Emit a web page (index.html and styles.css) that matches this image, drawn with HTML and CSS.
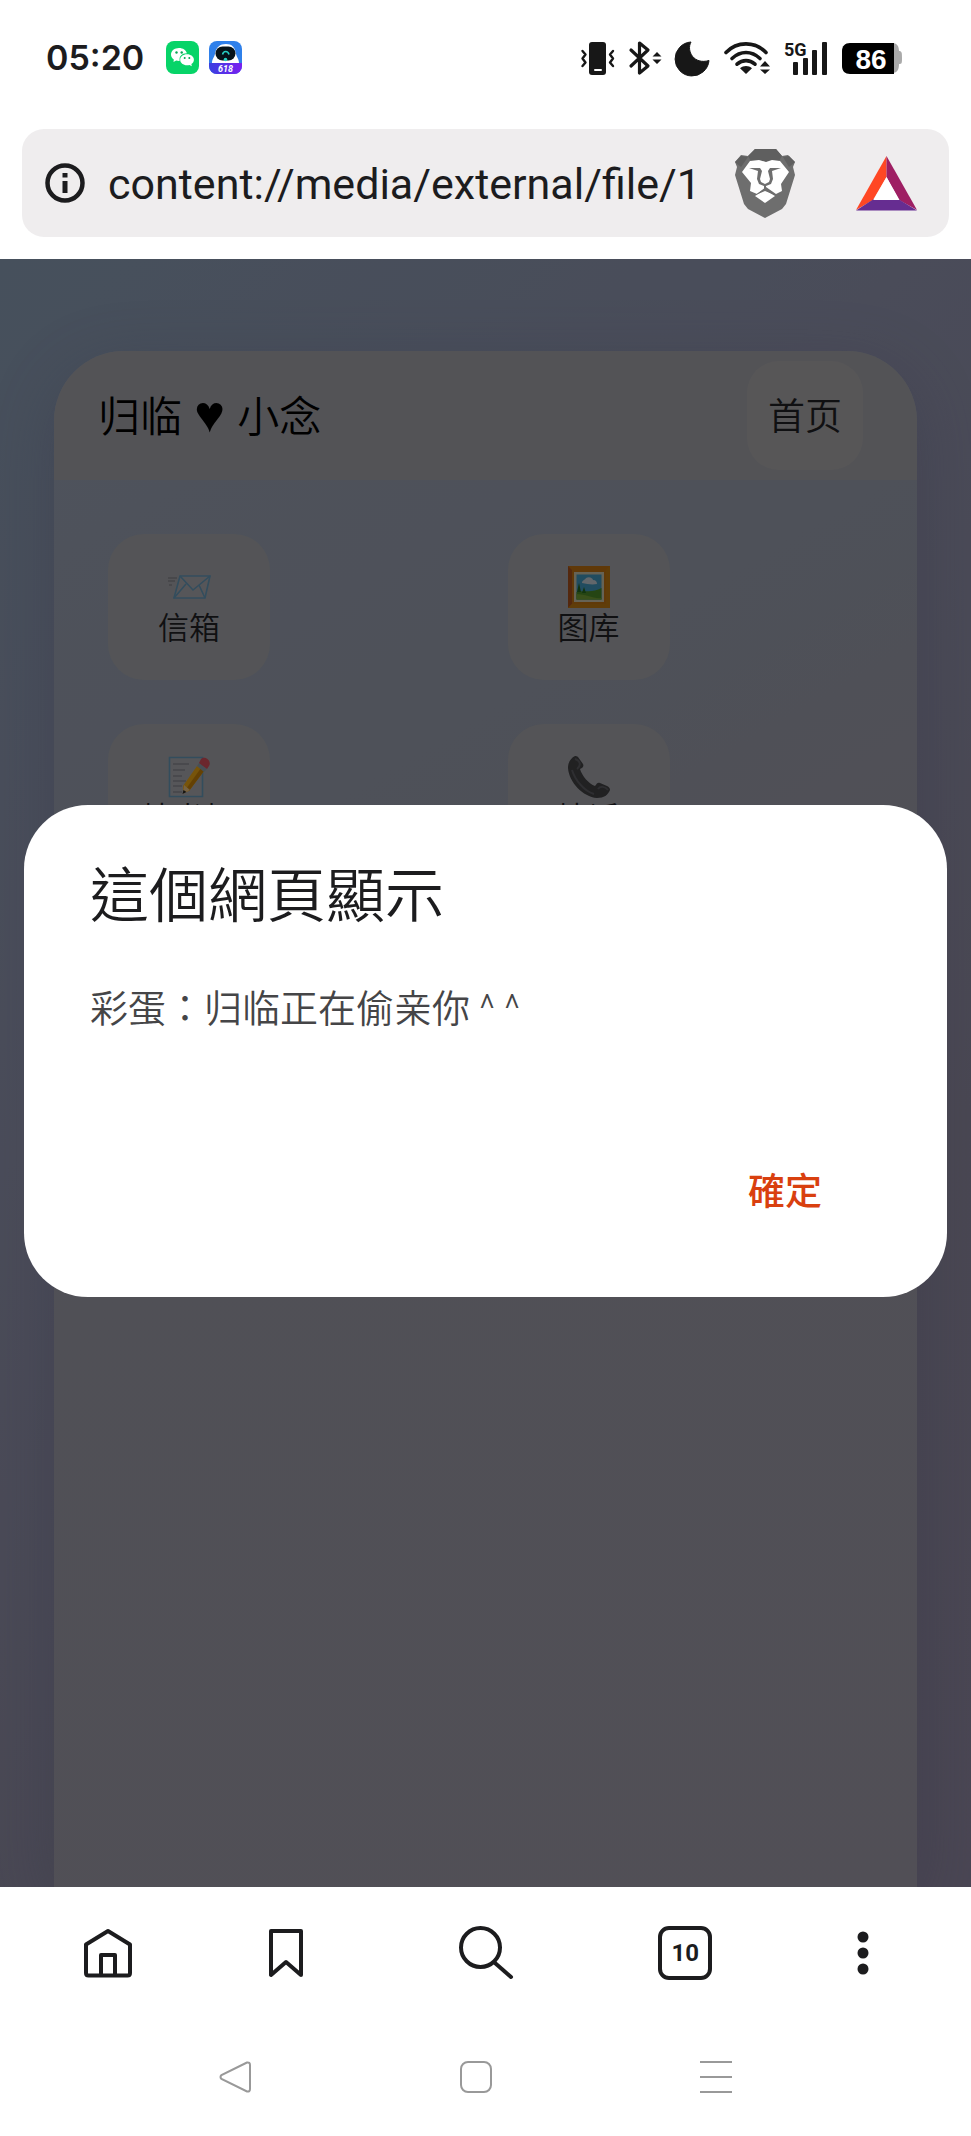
FILE: index.html
```html
<!DOCTYPE html>
<html lang="zh-CN">
<head>
  <meta charset="UTF-8" />
  <meta name="viewport" content="width=device-width, initial-scale=1" />
  <title>归临 ♥ 小念</title>
  <link rel="stylesheet" href="styles.css">
</head>
<body>

  <header class="status-bar">
    <span class="time">05:20</span>
    <svg class="app-icon" viewBox="0 0 33 33">
      <rect width="33" height="33" rx="8" fill="#07d468"/>
      <path d="M13 7c-4.500 0-8 2.800-8 6.500 0 2 1 3.800 2.800 5L7.500 21l2.700-1.500c1.200.3 2.400.5 3.600.3-1.200-4.300 2.200-7.600 7.100-7.500C20.200 9.200 17 7 13 7z" fill="#fff"/>
      <path d="M21 13.200c-4 0-6.800 2.400-6.800 5.500s2.900 5.500 6.800 5.500c.9 0 1.700-.1 2.500-.3l2.300 1.300-.4-2.200c1.600-1 2.500-2.600 2.500-4.300 0-3.100-3-5.500-6.900-5.500z" fill="#fff"/>
      <g fill="#07a653"><circle cx="10.500" cy="11.500" r="1.200"/><circle cx="15.700" cy="11.500" r="1.200"/><circle cx="18.700" cy="17" r="1"/><circle cx="23.300" cy="17" r="1"/></g>
    </svg>
    <svg class="app-icon" viewBox="0 0 33 33">
      <defs>
        <clipPath id="appClip"><rect width="33" height="33" rx="8"/></clipPath>
        <linearGradient id="saleBand"><stop offset="0" stop-color="#3940e0"/><stop offset="1" stop-color="#7a1ff0"/></linearGradient>
      </defs>
      <g clip-path="url(#appClip)">
        <rect width="33" height="33" fill="#2f80ea"/>
        <path d="M3 22c0-4 2-5 3-9C7 6 11 3 17 3s9 3 10 10c1 4 3 5 3 9z" fill="#fff"/>
        <rect x="6.500" y="5.500" width="20" height="14" rx="7" fill="#06131a"/>
        <path d="M13.500 13.500c1-4 5.500-4 6.500 0" fill="none" stroke="#27cfc5" stroke-width="1.600"/>
        <circle cx="16.500" cy="18.500" r="1.800" fill="#27cfc5"/>
        <rect y="22" width="33" height="11" fill="url(#saleBand)"/>
        <text x="16.500" y="31" class="sale">618</text>
      </g>
    </svg>

    <div class="signals">
      <svg width="34" height="34" viewBox="0 0 34 34">
        <rect x="8" y="1" width="17" height="33" rx="3" fill="#171717"/>
        <path d="M14 29h6" stroke="#fff" stroke-width="2" stroke-linecap="round"/>
        <path d="M1.500 10l3 3.500-3 4 3 4-3 3.500M32 10l-3 3.500 3 4-3 4 3 3.500" fill="none" stroke="#171717" stroke-width="2.400" stroke-linecap="round" stroke-linejoin="round"/>
      </svg>
      <svg width="33" height="34" viewBox="0 0 33 34">
        <path d="M2 9l17 16-8.500 7V2L19 9 2 25" fill="none" stroke="#171717" stroke-width="3.200" stroke-linejoin="round" stroke-linecap="round"/>
        <path d="M28 11l4.500 4.500h-9zM23.500 18.500h9L28 23z" fill="#171717"/>
      </svg>
      <svg width="34" height="34" viewBox="0 0 34 34">
        <path d="M15 1C10 10 18 24 33 19.500A17 17 0 1 1 15 1z" fill="#171717" stroke="#171717" stroke-linejoin="round"/>
      </svg>
      <svg width="46" height="34" viewBox="0 0 46 34">
        <g fill="none" stroke="#171717" stroke-width="3.600" stroke-linecap="round">
          <path d="M2 11.500C13 0 31 0 42 11.500"/><path d="M8 17.500c8.500-8 19.500-8 28 0"/><path d="M13 23.200c5.500-4.800 12.500-4.800 18 0"/>
        </g>
        <path d="M22 33l-6-5.800c3.500-3 8.500-3 12 0z" fill="#171717"/>
        <path d="M41 20l5 5.500H36zM36 28.500h10L41 33z" fill="#171717"/>
      </svg>
      <svg width="44" height="34" viewBox="0 0 44 34">
        <text x="0" y="15" class="net">5G</text>
        <g fill="#171717"><rect x="9" y="21" width="5" height="13" rx="1"/><rect x="19" y="17" width="5" height="17" rx="1"/><rect x="28" y="9" width="5" height="25" rx="1"/><rect x="38" y="1" width="5" height="33" rx="1"/></g>
      </svg>
      <svg width="60" height="32" viewBox="0 0 60 32">
        <path d="M50 1c5 0 7 3 7 8 3 0 3 2 3 7s0 6-3 6c0 6-2 9-7 9z" fill="#aaa"/>
        <path d="M8 1h44v31H8c-5 0-8-3-8-8V9c0-5 3-8 8-8z" fill="#000"/>
        <text x="29" y="27" class="battery">86</text>
      </svg>
    </div>
  </header>

  <div class="address-bar">
    <div class="address-box">
      <button class="icon-btn" aria-label="網站資訊">
        <svg width="40" height="40" viewBox="0 0 40 40">
          <circle cx="20" cy="20" r="17.500" fill="none" stroke="#1c1c1e" stroke-width="4.500"/>
          <path d="M17.500 10h5v4.500h-5zM17.500 18h5v12h-5z" fill="#1c1c1e"/>
        </svg>
      </button>
      <input class="url" type="text" aria-label="網址" value="content://media/external/file/1">
      <button class="icon-btn" aria-label="Shields">
        <svg width="60" height="69" viewBox="0 0 60 69">
          <path d="M20 0h21l6 7 6-1 7 7-2 5 2 8-9 29-4 5-17 9-17-9-4-5L0 26l2-8-2-5 6-7 7 1z" fill="#6e6e6e"/>
          <path d="M20 0h21l6 7-3 5-7-1-6 2-7-2-8 1-3-5zM0 13l6-6 7 1-7 10zM60 13l-6-6-6 1 6 10z" fill="#5f5f5f"/>
          <path d="M15 12l9-1 7 2 6-2 8 1 9 11-8 12 1 7-6 3-10-7-9 7-7-3 1-8-9-11z" fill="#fff"/>
          <path d="M30 41l10 6-10 7-10-7z" fill="#fff"/>
          <path d="M14 19l11 0 2 3-2 8 1 3 4 2 4-2 1-3-2-8 2-3 11 0-9 3 1 8-2 5-5 2v3l9 6-10-4-10 4 9-6v-3l-5-2-2-5 1-8z" fill="#6e6e6e"/>
        </svg>
      </button>
      <button class="icon-btn rewards" aria-label="Rewards">
        <svg width="61" height="55" viewBox="0 0 61 55">
          <path d="M30.500 0L0 54l17-10 13.500-23z" fill="#ff4724"/>
          <path d="M30.500 0L61 54 43 44 30.500 21z" fill="#9e1f63"/>
          <path d="M0 54.500l17-11h26l18 11z" fill="#662d91"/>
          <path d="M30.500 21L43.500 44h-26z" fill="#fff"/>
        </svg>
      </button>
    </div>
  </div>

  <main class="viewport">
    <section class="phone">
      <div class="phone-head">
        <h1>归临 <span class="heart">♥</span> 小念</h1>
        <button class="home-btn">首页</button>
      </div>
      <div class="apps">
        <button class="app">
          <svg class="emoji" viewBox="0 0 42 42">
            <path d="M12 10h30l-5 22H6z" fill="#909095" stroke="#55809c" stroke-width="1.600"/>
            <path d="M12 10l13 14 17-14M6 32l12-14M37 32l-6-13" fill="none" stroke="#55809c" stroke-width="1.600"/>
            <path d="M0 12h9M0 15h7M1 19h3" stroke="#66666c" stroke-width="1.200"/>
          </svg>
          <span>信箱</span>
        </button>
        <button class="app">
          <svg class="emoji" viewBox="0 0 42 42">
            <path d="M0 0h42v42H0z" fill="#a0600f"/>
            <path d="M0 0l4 4v34l-4 4z" fill="#8d4418"/><path d="M42 0v42H0l4-4h34V4z" fill="#a06610"/>
            <path d="M6 6h30v30H6z" fill="#aaa690"/><path d="M8.500 8.500h25v25h-25z" fill="#377f9f"/>
            <path d="M8.500 26c8-2 16 1 25-4v11.500h-25z" fill="#3f7420"/><path d="M8.500 28c9 0 17 5 25 4v1.500h-25z" fill="#5f852c"/>
            <path d="M14 17c0-3 3-3 4-5 3-2 7 0 7 2 3 0 4 2 4 4-5 1-10 0-15-1z" fill="#a4acb2"/>
            <path d="M11 17l2 9h-4zM16 21l2 6h-4z" fill="#1d571c"/>
          </svg>
          <span>图库</span>
        </button>
        <button class="app">
          <svg class="emoji" viewBox="0 0 42 42">
            <path d="M1.500 1.500h33v39h-33z" fill="#909095" stroke="#55809c" stroke-width="1.600"/>
            <path d="M5 8h16M5 14h12M5 20h9M5 25h13M5 30h9M5 36h9" stroke="#66666c" stroke-width="1.200"/>
            <path d="M29 10l7 5-15 20-6 2 0-7z" fill="#c68c12"/>
            <path d="M33 12l3 3-15 20-3-2z" fill="#a76d08"/>
            <path d="M16 29l-1 9 7-4z" fill="#c6a36d"/><path d="M15.500 34l-1 4 4-2z" fill="#222"/>
            <path d="M31 7l8 6-3 3-7-6z" fill="#77868f"/><path d="M33 3c4-4 11 2 8 7l-2 3-8-6z" fill="#b2414b"/>
          </svg>
          <span>情书柜</span>
        </button>
        <button class="app">
          <svg class="emoji" viewBox="0 0 42 42">
            <path d="M7 0C3 2 0 6 0 12c1 14 15 29 29 30 7 0 11-3 13-8 0-2-1-3-3-4l-7-3c-2-1-3 0-5 3-6-2-13-10-15-17 3-1 4-3 3-5L10 1C9 0 8 0 7 0z" fill="#37373a"/>
            <path d="M7 3c6 2 6 7 2 10M40 34c-3-4-8-4-10-1M4 14c3 10 12 21 22 24" fill="none" stroke="#4e4e52" stroke-width="2"/>
          </svg>
          <span>情话</span>
        </button>
      </div>
    </section>

    <div class="backdrop">
      <div class="dialog" lang="zh-TW" role="alertdialog" aria-labelledby="dialogTitle" aria-describedby="dialogText">
        <h2 id="dialogTitle">這個網頁顯示</h2>
        <p id="dialogText">彩蛋：归临正在偷亲你 ^ ^</p>
        <button class="ok">確定</button>
      </div>
    </div>
  </main>

  <nav class="toolbar">
    <button class="tool" aria-label="首頁">
      <svg width="48" height="48" viewBox="0 0 48 48"><path d="M24 2L2 15.500V44q0 2.500 2.500 2.500h39Q46 46.500 46 44V15.500zM17 46V26h14v20"/></svg>
    </button>
    <button class="tool" aria-label="書籤">
      <svg width="34" height="48" viewBox="0 0 34 48"><path d="M2 2h30v44L17 33 2 46z"/></svg>
    </button>
    <button class="tool tool-search" aria-label="搜尋">
      <svg width="54" height="54" viewBox="0 0 54 54"><circle cx="21.500" cy="21.500" r="19.500"/><path d="M36 37l16 14"/></svg>
    </button>
    <button class="tool" aria-label="分頁"><span class="tabs">10</span></button>
    <button class="tool" aria-label="選單">
      <svg class="dots" width="12" height="44" viewBox="0 0 12 44"><circle cx="6" cy="6" r="5.500"/><circle cx="6" cy="22" r="5.500"/><circle cx="6" cy="38" r="5.500"/></svg>
    </button>
  </nav>

  <nav class="system-nav">
    <button aria-label="返回"><svg width="32" height="32" viewBox="0 0 32 32"><path d="M28 1.500L2.500 14q-2 2 0 4L28 30.500q3 .5 3-2.500V4q0-3-3-2.500z"/></svg></button>
    <button aria-label="主畫面"><svg width="32" height="32" viewBox="0 0 32 32"><rect x="1" y="1" width="30" height="30" rx="7"/></svg></button>
    <button aria-label="最近"><svg width="32" height="32" viewBox="0 0 32 32"><path d="M0 1h32M0 16h32M0 31h32"/></svg></button>
  </nav>

</body>
</html>
```

FILE: styles.css
```css
*{box-sizing:border-box}
body{
  margin:0;
  min-height:100vh;
  display:flex;
  flex-direction:column;
  background:#fff;
  color:#1c1c1e;
  font-family:Roboto,"Noto Sans CJK SC",sans-serif
}
button{
  padding:0;
  border:none;
  background:none;
  color:inherit;
  font:inherit;
  cursor:pointer
}
svg{display:block;overflow:visible}
h1,h2,p{margin:0}

/* status bar */
.status-bar{
  display:flex;
  align-items:center;
  gap:10px;
  height:115px;
  padding:0 69px 0 46px
}
.time{
  margin-right:12px;
  font-family:Inter,sans-serif;
  font-size:34px;
  font-weight:600
}
.app-icon{width:33px;height:33px}
.sale{
  fill:#fff;
  font:italic bold 9px Roboto,sans-serif;
  text-anchor:middle
}
.signals{
  display:flex;
  align-items:center;
  gap:14px;
  margin-left:auto
}
.net{font:bold 18px Roboto,sans-serif;fill:#171717}
.battery{
  fill:#fff;
  font:bold 28px "Liberation Sans",sans-serif;
  text-anchor:middle
}

/* address bar */
.address-bar{padding:14px 22px 22px}
.address-box{
  display:flex;
  align-items:center;
  height:108px;
  padding:0 32px 0 23px;
  border-radius:22px;
  background:#efedee
}
.url{
  flex:1;
  min-width:0;
  margin:0 23px;
  padding:2px 0 0;
  border:none;
  background:none;
  color:#1c1c1e;
  font-family:Roboto,sans-serif;
  font-size:43px
}
.rewards{margin-left:61px}

/* page */
.viewport{
  position:relative;
  flex:1;
  display:flex;
  overflow:hidden;
  padding:92px 54px 0;
  background:linear-gradient(135deg,#76869a 0%,#7c7f95 35%,#7a778a 70%,#7b758b 100%)
}
.phone{
  flex:1;
  overflow:hidden;
  border-radius:70px 70px 0 0;
  background:linear-gradient(150deg,#828a9a 0%,#828794 30%,#868590 48%,#878490 100%);
  box-shadow:0 16px 64px rgba(84,84,112,.3)
}
.phone-head{
  display:flex;
  align-items:center;
  justify-content:space-between;
  height:129px;
  padding:0 54px 0 44px;
  background:#8b8b90
}
.phone-head h1{
  padding-bottom:4px;
  color:#000;
  font-size:42px;
  font-weight:350
}
.heart{
  margin:0 2px;
  font-family:"Liberation Sans",sans-serif;
  font-size:52px;
  line-height:1
}
.home-btn{
  height:109px;
  padding:0 21px 4px;
  border-radius:32px;
  background:#929092;
  font-size:37px;
  font-weight:350
}
.apps{
  display:grid;
  grid-template-columns:1fr 1fr;
  gap:44px;
  padding:54px
}
.app{
  display:flex;
  flex-direction:column;
  align-items:center;
  width:162px;
  height:146px;
  padding-top:32px;
  border-radius:36px;
  background:#8c8d91;
  font-size:31px;
  font-weight:350;
  line-height:42px
}
.emoji{width:42px;height:42px}

/* alert */
.backdrop{
  position:absolute;
  inset:0;
  display:flex;
  align-items:center;
  padding:0 24px 44px;
  background:rgba(0,0,0,.4)
}
.dialog{
  flex:1;
  display:flex;
  flex-direction:column;
  padding:52px 66px 60px;
  border-radius:64px;
  background:#fff;
  font-family:Roboto,"Noto Sans CJK TC",sans-serif
}
.dialog h2{
  font-size:59px;
  font-weight:350;
  line-height:80px
}
.dialog p{
  margin:44px 0 104px;
  color:#454547;
  font-size:38px;
  font-weight:350;
  line-height:56px
}
.ok{
  align-self:flex-end;
  height:96px;
  padding:0 59px;
  color:#d9400f;
  font-size:37px;
  font-weight:500
}

/* browser toolbar */
.toolbar{
  display:flex;
  align-items:center;
  justify-content:space-between;
  height:132px;
  padding:0 84px
}
.tool{
  display:flex;
  align-items:center;
  justify-content:center;
  width:48px;
  height:56px
}
.tool-search{width:92px}
.tool svg{
  flex:none;
  fill:none;
  stroke:#1c1c1e;
  stroke-width:4;
  stroke-linecap:round;
  stroke-linejoin:round
}
.tool .dots{fill:#1c1c1e;stroke:none}
.tabs{
  flex:none;
  width:54px;
  height:54px;
  border:4px solid #1c1c1e;
  border-radius:11px;
  font-size:24px;
  font-weight:bold;
  line-height:46px
}

/* system navigation */
.system-nav{
  display:flex;
  justify-content:space-between;
  height:117px;
  padding:42px 239px 0 219px
}
.system-nav button{height:32px}
.system-nav svg{
  fill:none;
  stroke:#999;
  stroke-width:2
}
```
